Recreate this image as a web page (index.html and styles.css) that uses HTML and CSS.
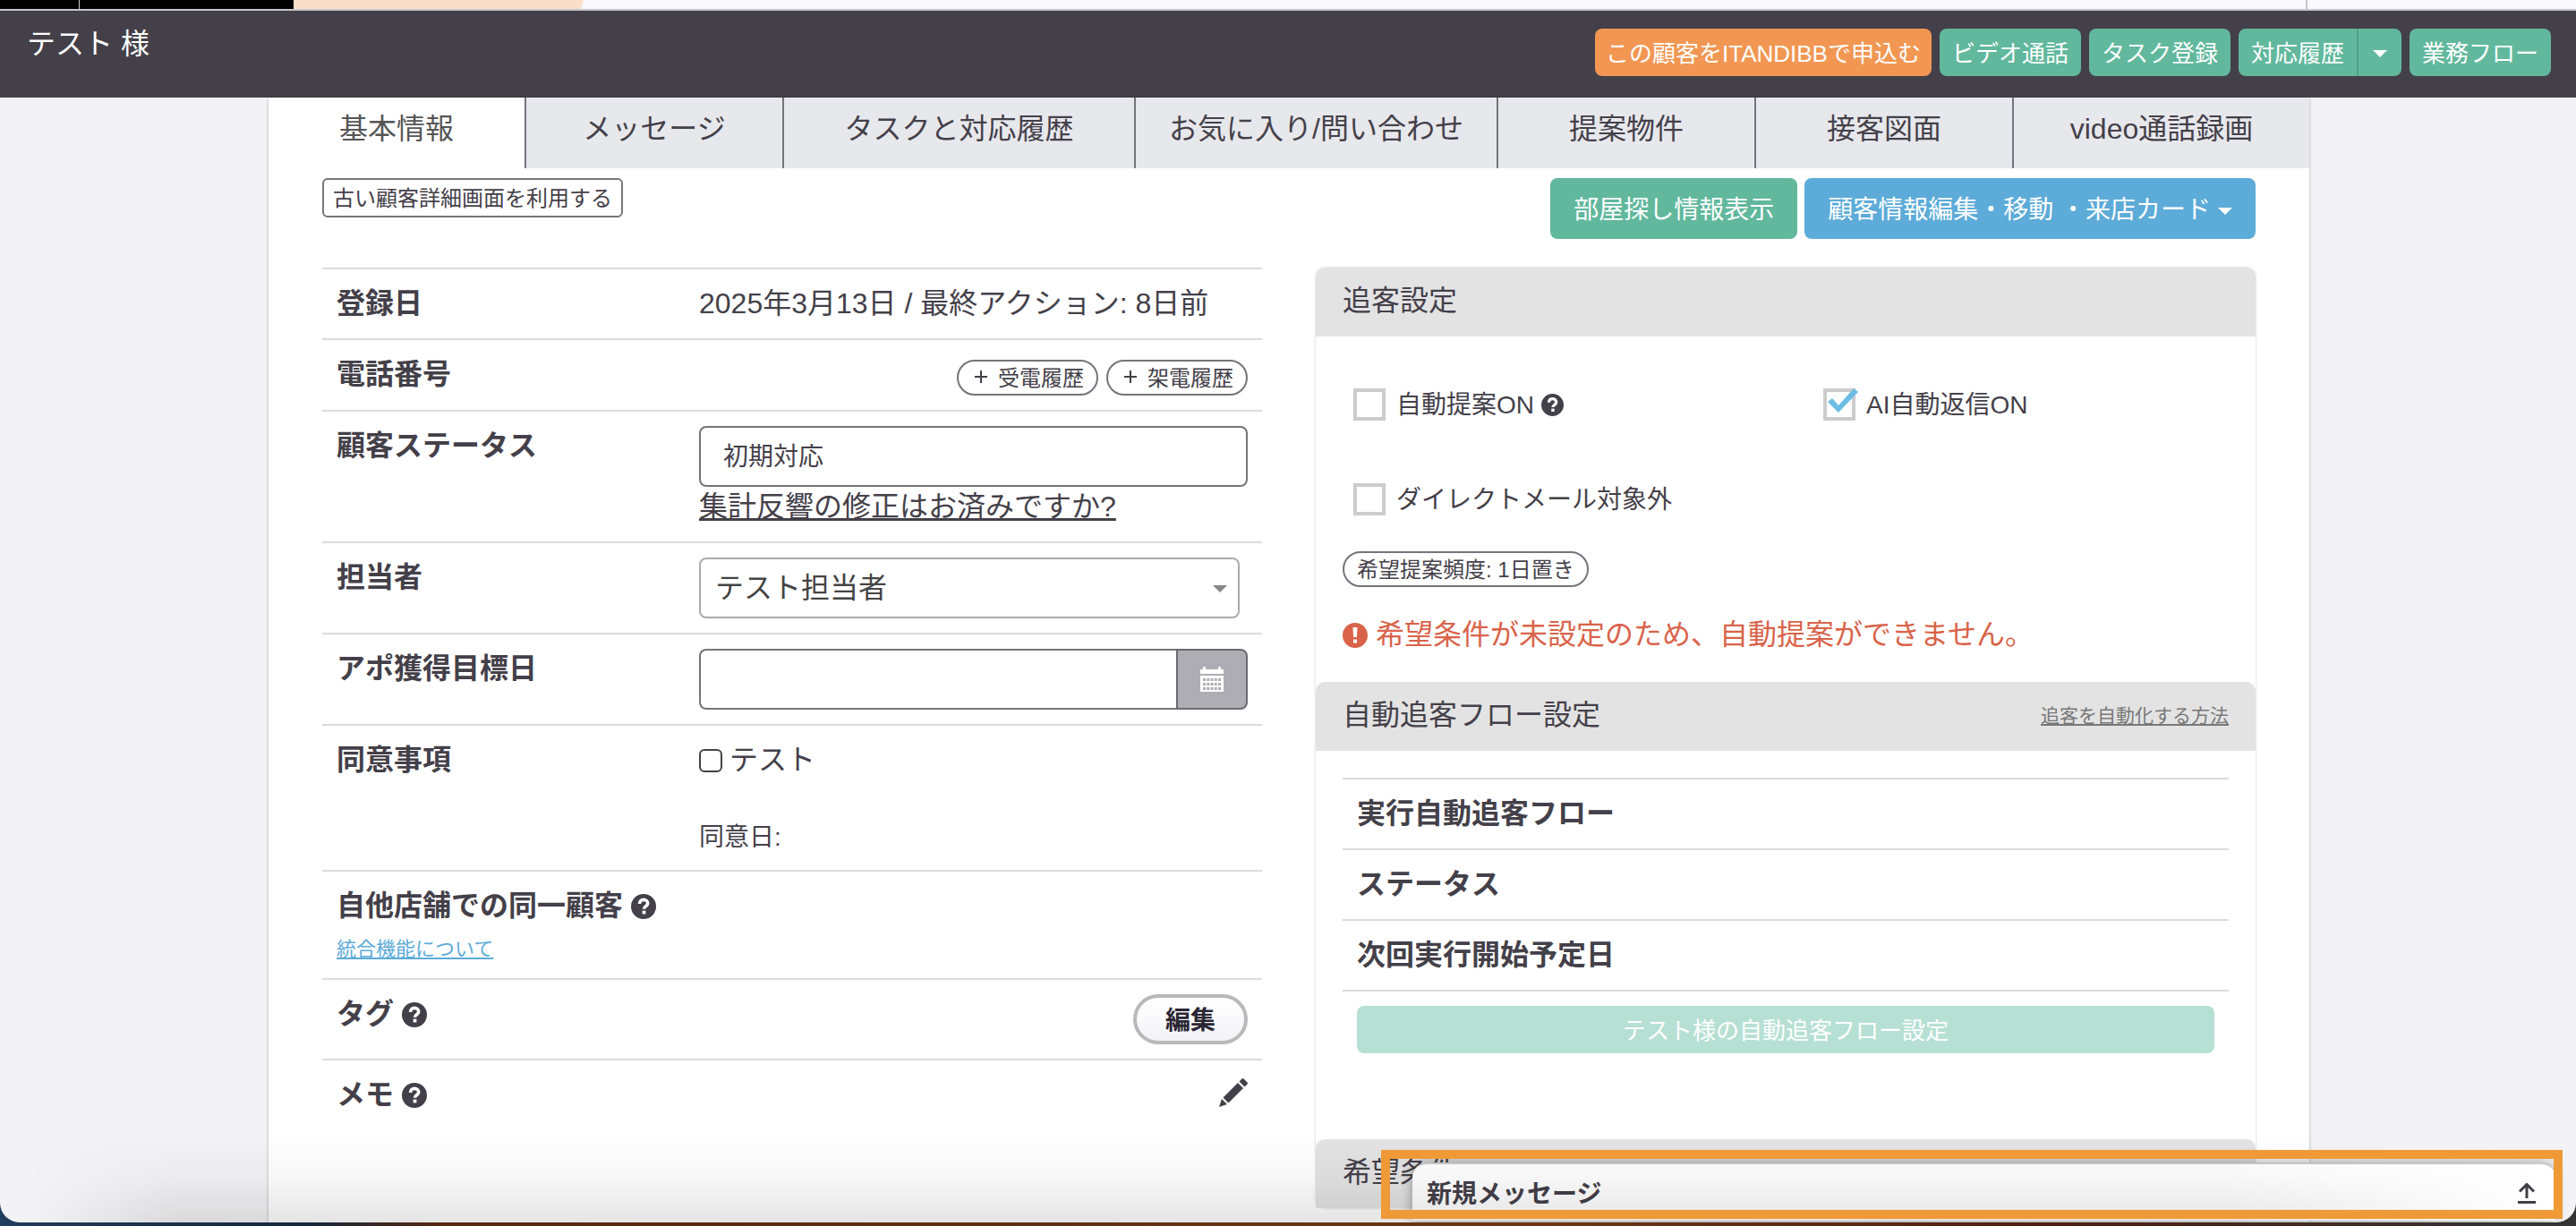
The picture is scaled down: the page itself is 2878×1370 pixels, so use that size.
FILE: index.html
```html
<!DOCTYPE html>
<html lang="ja">
<head>
    <meta charset="UTF-8">
    <title>テスト 様</title>
    <link rel="stylesheet" href="styles.css">
</head>
<body>
    <svg class="defs" width="0" height="0" aria-hidden="true">
        <symbol id="icon-question" viewBox="0 0 28 28">
            <circle cx="14" cy="14" r="14" fill="currentColor"/>
            <path d="M9.500 11c0-3 2-4.600 4.600-4.600s4.600 1.600 4.600 4.100c0 3.400-4.200 3.200-4.200 6.300" fill="none" stroke="#fff" stroke-width="3.600"/>
            <rect x="12.600" y="18.600" width="3.800" height="3.800" fill="#fff"/>
        </symbol>
    </svg>

    <div class="window">
        <div class="top-strip">
            <div class="strip-dark strip-first"></div>
            <div class="strip-dark"></div>
            <div class="strip-peach"></div>
            <div class="strip-light"></div>
        </div>

        <header class="header">
            <h1>テスト 様</h1>
            <div class="header-actions">
                <button class="btn btn-orange">この顧客をITANDIBBで申込む</button>
                <button class="btn btn-green">ビデオ通話</button>
                <button class="btn btn-green">タスク登録</button>
                <div class="btn-group">
                    <button class="btn btn-green">対応履歴</button>
                    <button class="btn btn-green btn-toggle" aria-label="メニュー"><span class="caret"></span></button>
                </div>
                <button class="btn btn-green">業務フロー</button>
            </div>
        </header>

        <main class="container">
            <nav class="tabs">
                <a class="tab active" href="#">基本情報</a>
                <a class="tab" href="#">メッセージ</a>
                <a class="tab" href="#">タスクと対応履歴</a>
                <a class="tab" href="#">お気に入り/問い合わせ</a>
                <a class="tab" href="#">提案物件</a>
                <a class="tab" href="#">接客図面</a>
                <a class="tab" href="#">video通話録画</a>
            </nav>

            <div class="toolbar">
                <button class="btn-outline">古い顧客詳細画面を利用する</button>
                <div class="toolbar-right">
                    <button class="btn btn-large btn-green">部屋探し情報表示</button>
                    <button class="btn btn-large btn-blue">顧客情報編集・移動 ・来店カード<span class="caret"></span></button>
                </div>
            </div>

            <div class="columns">
                <table class="info-table">
                    <tr>
                        <th>登録日</th>
                        <td>2025年3月13日 / 最終アクション: 8日前</td>
                    </tr>
                    <tr>
                        <th>電話番号</th>
                        <td>
                            <div class="pills">
                                <button class="pill"><svg width="14" height="14" viewBox="0 0 14 14"><path d="M7 0v14M0 7h14" stroke="currentColor" stroke-width="2"/></svg>受電履歴</button>
                                <button class="pill"><svg width="14" height="14" viewBox="0 0 14 14"><path d="M7 0v14M0 7h14" stroke="currentColor" stroke-width="2"/></svg>架電履歴</button>
                            </div>
                        </td>
                    </tr>
                    <tr>
                        <th><label for="status">顧客ステータス</label></th>
                        <td>
                            <select id="status" class="field"><option>初期対応</option></select>
                            <a class="text-link" href="#">集計反響の修正はお済みですか?</a>
                        </td>
                    </tr>
                    <tr>
                        <th><label for="staff">担当者</label></th>
                        <td>
                            <div class="staff-select">
                                <select id="staff" class="field field-staff"><option>テスト担当者</option></select>
                                <span class="caret"></span>
                            </div>
                        </td>
                    </tr>
                    <tr>
                        <th><label for="date">アポ獲得目標日</label></th>
                        <td>
                            <div class="date-group">
                                <input id="date" class="field" type="text">
                                <button class="date-button" aria-label="カレンダー">
                                    <svg width="26" height="28" viewBox="0 0 26 28">
                                        <path d="M0 8V3h3V1q0-1 1-1h1q1 0 1 1v2h14V1q0-1 1-1h1q1 0 1 1v2h3v5zM0 10h26v18H0z" fill="#fff"/>
                                        <path d="M3 14.500h20M3 19.500h20M3 24.500h20" stroke="#aeadb3" stroke-width="3" stroke-dasharray="3 1.250"/>
                                    </svg>
                                </button>
                            </div>
                        </td>
                    </tr>
                    <tr>
                        <th>同意事項</th>
                        <td>
                            <label class="agree"><input type="checkbox">テスト</label>
                            <p class="agree-date">同意日:</p>
                        </td>
                    </tr>
                    <tr>
                        <th colspan="2">
                            <span class="with-icon">自他店舗での同一顧客<svg class="icon"><use href="#icon-question"/></svg></span>
                            <a class="small-link" href="#">統合機能について</a>
                        </th>
                    </tr>
                    <tr>
                        <th><span class="with-icon">タグ<svg class="icon"><use href="#icon-question"/></svg></span></th>
                        <td><div class="pills"><button class="btn-edit">編集</button></div></td>
                    </tr>
                    <tr>
                        <th><span class="with-icon">メモ<svg class="icon"><use href="#icon-question"/></svg></span></th>
                        <td>
                            <div class="pills">
                                <button class="btn-icon" aria-label="メモを編集">
                                    <svg width="32" height="32" viewBox="0 0 32 32" fill="currentColor">
                                        <path d="M0 32l3-9 6 6zM4.500 21.500L21 5l6 6L10.500 27.500zM22.500 3.500l3-3q1-1 2 0l4 4q1 1 0 2l-3 3z"/>
                                    </svg>
                                </button>
                            </div>
                        </td>
                    </tr>
                </table>

                <div class="panels">
                    <section>
                        <div class="panel-header"><h2>追客設定</h2></div>
                        <div class="checks">
                            <label class="check"><input type="checkbox">自動提案ON<svg class="icon icon-small"><use href="#icon-question"/></svg></label>
                            <label class="check"><input type="checkbox" checked>AI自動返信ON</label>
                            <label class="check"><input type="checkbox">ダイレクトメール対象外</label>
                        </div>
                        <div class="panel-notes">
                            <button class="pill">希望提案頻度: 1日置き</button>
                            <p class="alert">
                                <svg width="28" height="28" viewBox="0 0 28 28"><circle cx="14" cy="14" r="14" fill="currentColor"/><path d="M11.500 5h5l-.6 11h-3.800zM12 18.500h4v4h-4z" fill="#fff"/></svg>
                                希望条件が未設定のため、自動提案ができません。
                            </p>
                        </div>
                    </section>

                    <section>
                        <div class="panel-header">
                            <h2>自動追客フロー設定</h2>
                            <a href="#">追客を自動化する方法</a>
                        </div>
                        <div class="flow">
                            <table class="info-table">
                                <tr><th>実行自動追客フロー</th></tr>
                                <tr><th>ステータス</th></tr>
                                <tr><th>次回実行開始予定日</th></tr>
                                <tr><td><button class="btn btn-green btn-wide" disabled>テスト様の自動追客フロー設定</button></td></tr>
                            </table>
                        </div>
                    </section>

                    <section>
                        <div class="panel-header"><h2>希望条件</h2></div>
                    </section>
                </div>
            </div>
        </main>

        <div class="message-bar">
            <span>新規メッセージ</span>
            <button class="btn-icon" aria-label="開く">
                <svg width="20" height="24" viewBox="0 0 20 24" fill="none" stroke="currentColor" stroke-width="3">
                    <path d="M10 17V2M2 9.500l8-8 8 8M0 21.500h20"/>
                </svg>
            </button>
        </div>
        <div class="bottom-shade"></div>
        <div class="highlight"></div>
    </div>
</body>
</html>
```
FILE: styles.css
```css
* {
    margin: 0;
    padding: 0;
    box-sizing: border-box;
}

body {
    height: 100vh;
    overflow: hidden;
    padding-bottom: 4px;
    background: linear-gradient(90deg, #1f3d5c 0, #16283c 12%, #552810 17%, #6b3515 60%, #4d2010 80%, #333 98%);
    font-family: "Liberation Sans", "Noto Sans CJK JP", sans-serif;
    font-size: 32px;
    line-height: 45px;
    color: #444049;
}

button,
input,
select {
    font-family: inherit;
    color: inherit;
}

button {
    cursor: pointer;
    white-space: nowrap;
}

.defs {
    position: absolute;
}

.window {
    position: relative;
    display: flex;
    flex-direction: column;
    height: 100%;
    overflow: hidden;
    border-radius: 0 0 22px 22px;
    background-color: #f3f3f5;
}

/* Strip above the header */
.top-strip {
    display: flex;
    flex-shrink: 0;
    height: 12px;
    border-bottom: 2px solid #c6c5cc;
    background-color: #f9f9fc;
}

.strip-dark {
    width: 239px;
    background-color: #000;
}

.strip-first {
    width: 89px;
    border-right: 1px solid #ccc;
}

.strip-peach {
    width: 324px;
    background-color: #fadfc8;
    clip-path: polygon(0 0, 100% 0, 99% 100%, 0 100%);
}

.strip-light {
    width: 1926px;
    border-right: 2px solid #c6c5cc;
}

/* Header */
.header {
    display: flex;
    flex-shrink: 0;
    justify-content: space-between;
    height: 97px;
    padding: 0 28px 0 30px;
    background-color: #444049;
    color: #fff;
}

.header h1 {
    margin-top: 15px;
    font-size: 32px;
    font-weight: normal;
}

.header-actions {
    display: flex;
    align-items: flex-start;
    gap: 9px;
    padding-top: 20px;
}

/* Buttons */
.btn {
    height: 53px;
    padding: 0 14px 3px;
    border: none;
    border-radius: 8px;
    font-size: 26px;
    color: #fff;
}

.btn-orange {
    padding: 0 12px 3px;
    background-color: #f19753;
}

.btn-green {
    background-color: #61b89d;
}

.btn-blue {
    background-color: #5dabd8;
}

.btn-large {
    height: 68px;
    padding: 0 26px 3px;
    font-size: 28px;
}

.btn-large .caret {
    margin-left: 8px;
}

.btn-wide {
    display: block;
    width: 100%;
}

.btn:disabled {
    background-color: #b7e0d4;
    cursor: default;
}

.btn-group {
    display: flex;
}

.btn-group .btn:first-child {
    border-radius: 8px 0 0 8px;
}

.btn-group .btn-toggle {
    padding: 0 16px;
    border-left: 2px solid #51a088;
    border-radius: 0 8px 8px 0;
}

.caret {
    display: inline-block;
    border-top: 8px solid currentColor;
    border-left: 8px solid transparent;
    border-right: 8px solid transparent;
    vertical-align: middle;
}

.btn-outline {
    height: 44px;
    padding: 0 10px 3px;
    border: 2px solid #74747c;
    border-radius: 6px;
    background-color: #fff;
    font-size: 24px;
}

.pill {
    display: inline-flex;
    align-items: center;
    gap: 12px;
    height: 40px;
    padding: 0 14px 3px;
    border: 2px solid #74747c;
    border-radius: 20px;
    background-color: #fff;
    font-size: 24px;
}

.btn-edit {
    width: 128px;
    height: 56px;
    padding-bottom: 3px;
    border: 4px solid #b9b9bc;
    border-radius: 28px;
    background: linear-gradient(#fff, #f3f3f6);
    font-size: 28px;
    font-weight: bold;
    color: #2a2633;
}

.btn-icon {
    display: flex;
    border: none;
    background: none;
}

/* Page container */
.container {
    flex: 1;
    margin: 0 298px 0 300px;
    overflow: hidden;
    background-color: #fff;
    box-shadow: 0 0 3px rgba(0, 0, 0, 0.3);
}

.tabs {
    display: grid;
    grid-template-columns: 286fr 288fr 393fr 405fr 288fr 288fr 332fr;
}

.tab {
    height: 79px;
    padding-top: 13px;
    border-left: 2px solid #74747c;
    background-color: #e7e8ec;
    text-align: center;
    text-decoration: none;
    white-space: nowrap;
    color: #444049;
}

.tab.active {
    border-left: none;
    background-color: #fff;
    color: #555;
}

.toolbar {
    display: flex;
    justify-content: space-between;
    align-items: flex-start;
    padding: 11px 60px 32px;
}

.toolbar-right {
    display: flex;
    gap: 8px;
}

.columns {
    display: grid;
    grid-template-columns: 1fr 1fr;
    align-items: start;
    gap: 60px;
    padding: 0 60px;
}

/* Customer info */
.info-table {
    width: 100%;
    border-spacing: 0;
}

.info-table th,
.info-table td {
    padding: 16px;
    border-top: 2px solid #dcdcdc;
    text-align: left;
    vertical-align: top;
}

.info-table th {
    width: 405px;
}

.pills {
    display: flex;
    justify-content: flex-end;
    gap: 9px;
}

.pills .pill {
    margin-top: 6px;
    padding-left: 18px;
}

.pills .btn-icon {
    padding: 4px 0;
}

.field {
    display: block;
    width: 100%;
    height: 68px;
    padding: 0 25px;
    border: 2px solid #74747c;
    border-radius: 8px;
    background-color: #fff;
    font-size: 28px;
    appearance: none;
}

.field-staff {
    padding: 0 16px;
    border-color: #aaa;
    font-size: 32px;
    color: #444;
}

.staff-select {
    position: relative;
    margin-right: 9px;
}

.staff-select .caret {
    position: absolute;
    top: 31px;
    right: 14px;
    color: #888;
    pointer-events: none;
}

.date-group {
    display: flex;
}

.date-group .field {
    flex: 1;
    border-right: none;
    border-radius: 8px 0 0 8px;
}

.date-button {
    display: flex;
    align-items: center;
    justify-content: center;
    width: 80px;
    border: 2px solid #6b6a71;
    border-radius: 0 8px 8px 0;
    background-color: #aeadb3;
}

.text-link {
    display: block;
    color: #444049;
}

.agree {
    display: flex;
    align-items: center;
    gap: 8px;
}

.agree input {
    width: 26px;
    height: 26px;
    border: 2px solid #444049;
    border-radius: 6px;
    appearance: none;
}

.agree-date {
    margin-top: 44px;
    font-size: 28px;
    line-height: 40px;
}

.with-icon {
    display: flex;
    align-items: center;
    gap: 9px;
}

.icon {
    width: 28px;
    height: 28px;
}

.icon-small {
    width: 25px;
    height: 25px;
}

.small-link {
    display: block;
    margin-top: 10px;
    font-size: 22px;
    font-weight: normal;
    line-height: 32px;
    color: #5dabd8;
}

/* Right side panels */
.panels {
    box-shadow: 0 0 3px rgba(0, 0, 0, 0.2);
    border-radius: 10px;
}

.panel-header {
    display: flex;
    justify-content: space-between;
    align-items: center;
    padding: 15px 30px 17px;
    border-radius: 10px 10px 0 0;
    background-color: #e3e3e3;
}

.panel-header h2 {
    font-size: 32px;
    font-weight: normal;
}

.panel-header a {
    font-size: 21px;
    color: #777;
}

.checks {
    display: grid;
    grid-template-columns: 1fr 1fr;
    gap: 70px 0;
    padding: 58px 0 40px;
}

.check {
    display: flex;
    align-items: center;
    height: 36px;
    padding-left: 42px;
    font-size: 28px;
}

.check input {
    position: relative;
    width: 36px;
    height: 36px;
    margin-right: 12px;
    border: 4px solid #ccc;
    appearance: none;
}

/* Tick sticks out over the box border */
.check input:checked::after {
    content: "";
    position: absolute;
    top: -4px;
    left: -4px;
    width: 40px;
    height: 28px;
    background-color: #6bbde3;
    clip-path: polygon(5px 15px, 10px 11px, 17px 19px, 34px 0, 39px 4px, 17px 27px);
}

.check .icon {
    margin-left: 8px;
}

.panel-notes {
    padding: 0 30px 30px;
}

.panel-notes .pill {
    display: flex;
}

.alert {
    display: flex;
    align-items: center;
    gap: 9px;
    margin-top: 31px;
    color: #d9634a;
}

.flow {
    padding: 30px 30px 80px;
}

/* Message bar */
.message-bar {
    position: absolute;
    right: 23px;
    bottom: 2px;
    left: 1578px;
    display: flex;
    justify-content: space-between;
    align-items: center;
    height: 65px;
    padding: 3px 22px 0 16px;
    border-top: 2px solid #c8c8c8;
    border-radius: 16px 16px 0 0;
    background-color: #fff;
    box-shadow: 0 0 14px rgba(0, 0, 0, 0.35);
    font-size: 28px;
    font-weight: bold;
}

.bottom-shade {
    position: absolute;
    right: 0;
    bottom: 0;
    left: 0;
    height: 100px;
    background: linear-gradient(transparent, rgba(0, 0, 0, 0.03) 50%, rgba(0, 0, 0, 0.1));
    mask-image: linear-gradient(90deg, transparent 30px, #000 200px, #000 calc(100% - 400px), transparent calc(100% - 30px));
    pointer-events: none;
}

.highlight {
    position: absolute;
    right: 15px;
    bottom: 4px;
    left: 1543px;
    height: 77px;
    border: 10px solid #f09937;
    pointer-events: none;
}
```
